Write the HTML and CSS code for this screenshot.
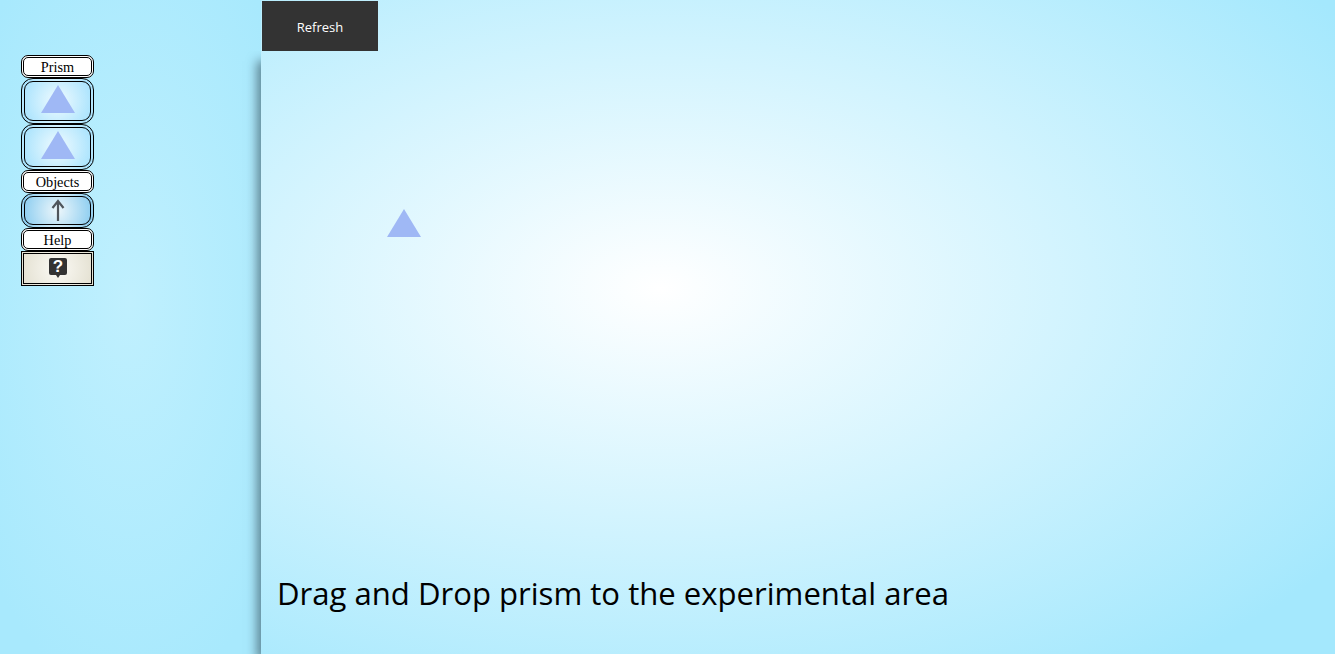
FILE: index.html
```html
<!DOCTYPE html>
<html lang="en">
<head>
    <meta charset="UTF-8">
    <title>Prism</title>
    <link rel="stylesheet" href="styles.css">
</head>
<body>
<div class="sidebar">
    <div class="label">Prism</div>
    <div class="tool">
        <svg class="prism" width="36" height="30" viewBox="0 0 36 30"><polygon points="18,1 35,29 1,29"/></svg>
    </div>
    <div class="tool">
        <svg class="prism" width="36" height="30" viewBox="0 0 36 30"><polygon points="18,1 35,29 1,29"/></svg>
    </div>
    <div class="label">Objects</div>
    <div class="tool tool-arrow">
        <svg width="18" height="22" viewBox="0 0 18 22"><path d="M9 22V2M3.500 9L9 2l5.500 7" fill="none" stroke="#50555b" stroke-width="2.200"/></svg>
    </div>
    <div class="label">Help</div>
    <div class="tool-help">
        <svg width="20" height="22" viewBox="0 0 20 22">
            <path d="M3 1h14a2 2 0 0 1 2 2v13a2 2 0 0 1-2 2h-5l-2 3-2-3H3a2 2 0 0 1-2-2V3a2 2 0 0 1 2-2z" fill="#333"/>
            <text x="10" y="15" class="help-mark">?</text>
        </svg>
    </div>
</div>
<div class="main">
    <div class="topbar">
        <button class="refresh">Refresh</button>
    </div>
    <div class="area">
        <svg class="dropped" width="36" height="30" viewBox="0 0 36 30"><polygon points="18,1 35,29 1,29"/></svg>
        <div class="hint">Drag and Drop prism to the experimental area</div>
    </div>
</div>
</body>
</html>
```

FILE: styles.css
```css
html, body {
    height: 100%;
}

body {
    margin: 0;
    display: flex;
    height: 654px;
    overflow: hidden;
    background: radial-gradient(ellipse 830px 475px at 660px 288px, #ffffff 0%, #a4e8fd 100%);
    background-color: #a4e8fd;
}

.sidebar {
    width: 261px;
    box-sizing: border-box;
    padding: 55px 0 0 21px;
    display: flex;
    flex-direction: column;
    align-items: flex-start;
    background: radial-gradient(ellipse 190px 400px at 130px 300px, #c0f0fe 0%, #a8e9fd 100%);
}

.label {
    width: 73px;
    height: 23px;
    box-sizing: border-box;
    border: 3px double #000;
    border-radius: 7px;
    background: #fff;
    font-family: "Liberation Serif", serif;
    font-size: 14.300px;
    line-height: 18px;
    text-align: center;
    color: #000;
}

.tool {
    width: 73px;
    height: 46px;
    box-sizing: border-box;
    border: 4px double #000;
    border-radius: 12px;
    padding-bottom: 4px;
    background: radial-gradient(circle, #f0fbff 0%, #a6e2fd 100%);
    display: flex;
    justify-content: center;
    align-items: center;
}

.tool-arrow {
    height: 35px;
    padding-bottom: 2px;
    background: radial-gradient(circle, #eef7fb 0%, #8ccdf0 100%);
}

.tool-help {
    width: 73px;
    height: 35px;
    box-sizing: border-box;
    border: 3px double #000;
    padding-bottom: 2px;
    background: radial-gradient(circle, #fbfaf5 0%, #e4e1d2 100%);
    display: flex;
    justify-content: center;
    align-items: center;
}

.help-mark {
    font-family: "Liberation Sans", sans-serif;
    font-size: 17px;
    font-weight: bold;
    fill: #fff;
    text-anchor: middle;
}

.prism polygon,
.dropped polygon {
    fill: #9fb8f5;
}

.prism,
.dropped {
    filter: blur(0.4px);
}

.main {
    flex: 1;
    display: flex;
    flex-direction: column;
}

.topbar {
    height: 51px;
    padding: 1px 0 0 1px;
    box-sizing: border-box;
}

.refresh {
    width: 116px;
    height: 50px;
    border: 0;
    padding: 2px 0 0;
    background: #333333;
    color: #ffffff;
    font-family: "Open Sans", sans-serif;
    font-size: 13px;
    display: block;
}

.area {
    flex: 1;
    position: relative;
    box-shadow: -6px 8px 10px -2px rgba(30, 50, 60, 0.55);
    clip-path: inset(0 0 0 -20px);
}

.dropped {
    position: absolute;
    left: 125px;
    top: 157px;
}

.hint {
    position: absolute;
    left: 16px;
    top: 521px;
    font-family: "Open Sans", sans-serif;
    font-size: 31.100px;
    line-height: 42px;
    color: #000;
    white-space: nowrap;
}
```
